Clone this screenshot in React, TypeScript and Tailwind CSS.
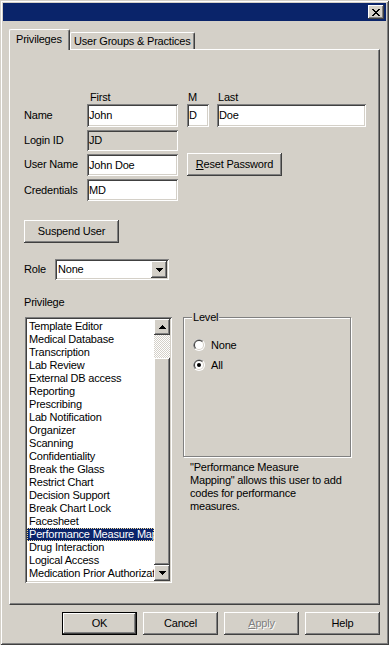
import React from "react";

const RAISED =
  "shadow-[inset_-1px_-1px_0_#404040,inset_1px_1px_0_#ffffff,inset_-2px_-2px_0_#808080,inset_2px_2px_0_#d4d0c8]";
const SUNKEN =
  "shadow-[inset_1px_1px_0_#808080,inset_-1px_-1px_0_#ffffff,inset_2px_2px_0_#404040,inset_-2px_-2px_0_#d4d0c8]";

const ITEMS = [
  "Template Editor",
  "Medical Database",
  "Transcription",
  "Lab Review",
  "External DB access",
  "Reporting",
  "Prescribing",
  "Lab Notification",
  "Organizer",
  "Scanning",
  "Confidentiality",
  "Break the Glass",
  "Restrict Chart",
  "Decision Support",
  "Break Chart Lock",
  "Facesheet",
  "Performance Measure Mapping",
  "Drug Interaction",
  "Logical Access",
  "Medication Prior Authorization",
];

function UpArrow() {
  return (
    <svg width="7" height="4" viewBox="0 0 7 4" shapeRendering="crispEdges">
      <rect x="3" y="0" width="1" height="1" fill="#000" />
      <rect x="2" y="1" width="3" height="1" fill="#000" />
      <rect x="1" y="2" width="5" height="1" fill="#000" />
      <rect x="0" y="3" width="7" height="1" fill="#000" />
    </svg>
  );
}

function DownArrow() {
  return (
    <svg width="7" height="4" viewBox="0 0 7 4" shapeRendering="crispEdges">
      <rect x="0" y="0" width="7" height="1" fill="#000" />
      <rect x="1" y="1" width="5" height="1" fill="#000" />
      <rect x="2" y="2" width="3" height="1" fill="#000" />
      <rect x="3" y="3" width="1" height="1" fill="#000" />
    </svg>
  );
}

function CloseGlyph() {
  return (
    <svg width="8" height="7" viewBox="0 0 8 7" shapeRendering="crispEdges">
      <rect x="0" y="0" width="2" height="1" fill="#000" />
      <rect x="6" y="0" width="2" height="1" fill="#000" />
      <rect x="1" y="1" width="2" height="1" fill="#000" />
      <rect x="5" y="1" width="2" height="1" fill="#000" />
      <rect x="2" y="2" width="4" height="1" fill="#000" />
      <rect x="3" y="3" width="2" height="1" fill="#000" />
      <rect x="2" y="4" width="4" height="1" fill="#000" />
      <rect x="1" y="5" width="2" height="1" fill="#000" />
      <rect x="5" y="5" width="2" height="1" fill="#000" />
      <rect x="0" y="6" width="2" height="1" fill="#000" />
      <rect x="6" y="6" width="2" height="1" fill="#000" />
    </svg>
  );
}

function Radio({ checked }: { checked?: boolean }) {
  return (
    <svg width="12" height="12" viewBox="0 0 12 12">
      <circle cx="6" cy="6" r="6" fill="#ffffff" />
      <path d="M1.76 10.24 A6 6 0 0 1 10.24 1.76 Z" fill="#808080" />
      <circle cx="6" cy="6" r="5" fill="#d4d0c8" />
      <path d="M2.46 9.54 A5 5 0 0 1 9.54 2.46 Z" fill="#404040" />
      <circle cx="6" cy="6" r="4" fill="#ffffff" />
      {checked && <circle cx="6" cy="6" r="2" fill="#000000" />}
    </svg>
  );
}

function Field({
  className,
  value,
  disabled,
}: {
  className: string;
  value: string;
  disabled?: boolean;
}) {
  return (
    <div
      className={`${SUNKEN} ${
        disabled ? "bg-[#d4d0c8]" : "bg-white"
      } flex items-center pl-[2px] overflow-hidden whitespace-nowrap ${className}`}
    >
      {value}
    </div>
  );
}

function Btn({
  className,
  children,
  def,
}: {
  className: string;
  children: React.ReactNode;
  def?: boolean;
}) {
  return (
    <div
      className={`bg-[#d4d0c8] ${RAISED} flex items-center justify-center whitespace-nowrap ${
        def ? "border border-black" : ""
      } ${className}`}
    >
      {children}
    </div>
  );
}

export default function App() {
  return (
    <div className="w-[389px] h-[645px] bg-[#d4d0c8] p-[3px] shadow-[inset_1px_1px_0_#d4d0c8,inset_-1px_-1px_0_#404040,inset_2px_2px_0_#ffffff,inset_-2px_-2px_0_#808080] font-['Liberation_Sans',Arial,sans-serif] text-[11px] leading-[13px] tracking-[-0.2px] text-black flex flex-col overflow-hidden select-none">
      {/* Title bar */}
      <div className="h-[18px] shrink-0 bg-[#0a246a] flex items-center justify-end pr-[2px]">
        <div className={`w-[16px] h-[14px] bg-[#d4d0c8] ${RAISED} flex items-center justify-center`}>
          <CloseGlyph />
        </div>
      </div>

      {/* Tabs */}
      <div className="ml-[6px] mt-[8px] h-[20px] shrink-0 flex items-end">
        <div className="relative z-10 -mb-[1px] h-[21px] w-[61px] bg-[#d4d0c8] border-t border-l border-t-white border-l-white border-r border-r-[#404040] shadow-[inset_-1px_0_0_#808080] rounded-tl-[2px] rounded-tr-[2px] pl-[6px] pt-[3px] whitespace-nowrap">
          Privileges
        </div>
        <div className="h-[17px] w-[125px] bg-[#d4d0c8] border-t border-l border-t-white border-l-white border-r border-r-[#404040] shadow-[inset_-1px_0_0_#808080] rounded-tl-[2px] rounded-tr-[2px] pl-[3px] pt-[2px] whitespace-nowrap overflow-hidden">
          User Groups &amp; Practices
        </div>
      </div>

      {/* Tab panel */}
      <div className="ml-[6px] w-[371px] h-[556px] shrink-0 border-t border-l border-t-white border-l-white border-r border-b border-r-[#404040] border-b-[#404040] shadow-[inset_-1px_-1px_0_#808080] pl-[14px] flex flex-col">
        {/* column headers */}
        <div className="mt-[41px] h-[13px] flex">
          <div className="w-[63px]" />
          <div className="w-[100px] pl-[3px]">First</div>
          <div className="w-[30px] pl-[1px]">M</div>
          <div className="pl-[1px]">Last</div>
        </div>

        {/* Name */}
        <div className="h-[23px] flex items-center">
          <div className="w-[63px]">Name</div>
          <Field className="w-[91px] h-[23px]" value="John" />
          <Field className="ml-[9px] w-[22px] h-[23px]" value="D" />
          <Field className="ml-[8px] w-[149px] h-[23px]" value="Doe" />
        </div>

        {/* Login ID */}
        <div className="mt-[3px] h-[21px] flex items-center">
          <div className="w-[63px]">Login ID</div>
          <Field className="w-[91px] h-[21px]" value="JD" disabled />
        </div>

        {/* User Name */}
        <div className="mt-[2px] h-[23px] flex items-start">
          <div className="w-[63px] h-[23px] flex items-center">User Name</div>
          <Field className="mt-[1px] w-[91px] h-[22px]" value="John Doe" />
          <Btn className="ml-[9px] w-[95px] h-[23px]">
            <span>
              <span className="underline">R</span>eset Password
            </span>
          </Btn>
        </div>

        {/* Credentials */}
        <div className="mt-[3px] h-[22px] flex items-center">
          <div className="w-[63px]">Credentials</div>
          <Field className="w-[91px] h-[22px]" value="MD" />
        </div>

        {/* Suspend User */}
        <Btn className="mt-[19px] w-[95px] h-[23px]">Suspend User</Btn>

        {/* Role */}
        <div className="mt-[16px] h-[21px] flex items-center">
          <div className="w-[31px]">Role</div>
          <div className={`${SUNKEN} bg-white w-[114px] h-[21px] p-[2px] flex items-center`}>
            <div className="flex-1 pl-[1px]">None</div>
            <div className={`w-[16px] h-[17px] bg-[#d4d0c8] ${RAISED} flex items-center justify-center`}>
              <DownArrow />
            </div>
          </div>
        </div>

        {/* Privilege */}
        <div className="mt-[16px] h-[13px]">Privilege</div>

        {/* Main section */}
        <div className="mt-[8px] flex items-start">
          {/* list box */}
          <div className={`${SUNKEN} ml-[1px] bg-white w-[147px] h-[266px] p-[2px] flex`}>
            <div className="flex-1 pt-[1px] overflow-hidden">
              {ITEMS.map((t, i) => (
                <div
                  key={t}
                  className={`h-[13px] pl-[2px] whitespace-nowrap overflow-hidden ${
                    i === 16
                      ? "bg-[#0a246a] text-white outline-1 outline-dotted outline-[#f5db95] -outline-offset-1"
                      : ""
                  }`}
                >
                  {t}
                </div>
              ))}
            </div>
            <div className="w-[16px] flex flex-col">
              <div className={`h-[16px] bg-[#d4d0c8] ${RAISED} flex items-center justify-center`}>
                <UpArrow />
              </div>
              <div className="h-[23px] bg-[image:repeating-conic-gradient(#d4d0c8_0_25%,#ffffff_0_50%)] bg-[length:2px_2px]" />
              <div className={`flex-1 bg-[#d4d0c8] ${RAISED}`} />
              <div className={`h-[16px] bg-[#d4d0c8] ${RAISED} flex items-center justify-center`}>
                <DownArrow />
              </div>
            </div>
          </div>

          {/* right column */}
          <div className="ml-[11px] flex flex-col">
            <div className="relative w-[168px] h-[140px] border border-[#808080] shadow-[inset_1px_1px_0_#ffffff,1px_1px_0_#ffffff]">
              <div className="absolute left-[8px] top-[-7px] bg-[#d4d0c8] px-[1px]">Level</div>
              <div className="pt-[21px] pl-[9px] flex flex-col gap-[8px]">
                <div className="h-[12px] flex items-center gap-[6px]">
                  <Radio />
                  <span>None</span>
                </div>
                <div className="h-[12px] flex items-center gap-[6px]">
                  <Radio checked />
                  <span>All</span>
                </div>
              </div>
            </div>
            <div className="mt-[4px] ml-[7px] whitespace-nowrap">
              "Performance Measure
              <br />
              Mapping" allows this user to add
              <br />
              codes for performance
              <br />
              measures.
            </div>
          </div>
        </div>
      </div>

      {/* Bottom buttons */}
      <div className="mt-[7px] pr-[6px] flex justify-end gap-[6px]">
        <Btn className="w-[75px] h-[23px]" def>
          OK
        </Btn>
        <Btn className="w-[75px] h-[23px]">Cancel</Btn>
        <Btn className="w-[75px] h-[23px] text-[#808080] [text-shadow:1px_1px_0_#ffffff]">
          <span>
            <span className="underline">A</span>pply
          </span>
        </Btn>
        <Btn className="w-[75px] h-[23px]">Help</Btn>
      </div>
    </div>
  );
}
